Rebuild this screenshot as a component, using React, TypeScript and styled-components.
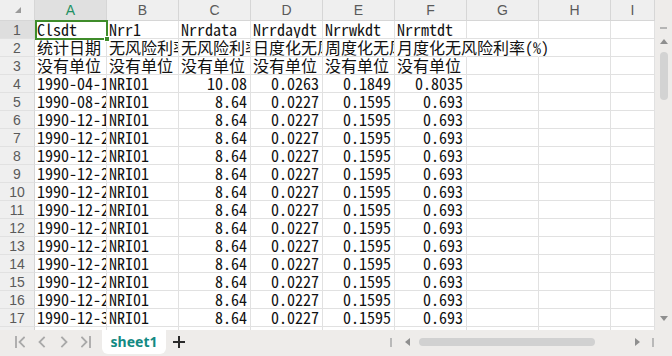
import React from 'react';
import styled, { createGlobalStyle } from 'styled-components';

const Global = createGlobalStyle`
  html, body { margin: 0; padding: 0; background: #fff; }
  body { width: 672px; height: 356px; overflow: hidden; }
`;

const CELL_FONT = '"Noto Sans Mono CJK SC", "Noto Sans CJK SC", "Liberation Mono", monospace';
const UI_FONT = '"Liberation Sans", "Noto Sans", Arial, sans-serif';
const GRID = '#e1e1e1';
const HEAD_LINE = '#d6d6d6';
const HEAD_BG = '#efefef';
const BAR_BG = '#eeecea';
const SEL = '#3f8c2a';

const Shell = styled.div`
  width: 672px;
  height: 356px;
  display: flex;
  flex-direction: column;
  overflow: hidden;
`;

const Main = styled.div`
  display: flex;
  height: 330px;
`;

const Sheet = styled.div`
  position: relative;
  flex: 1;
  overflow: hidden;
  display: grid;
  grid-template-columns: 35px repeat(8, 72px) 1fr;
  grid-template-rows: 21px repeat(18, 18px);
  background: #fff;
`;

const Corner = styled.div`
  background: ${HEAD_BG};
  border-right: 1px solid ${HEAD_LINE};
  border-bottom: 1px solid ${HEAD_LINE};
  display: flex;
  align-items: center;
  justify-content: center;
  padding-left: 2px;
`;

const ColHead = styled.div<{ $active?: boolean }>`
  background: ${(p) => (p.$active ? '#e0e0e0' : HEAD_BG)};
  color: ${(p) => (p.$active ? '#1f9063' : '#5a5a5a')};
  border-right: 1px solid ${HEAD_LINE};
  border-bottom: 1px solid ${HEAD_LINE};
  font-family: ${UI_FONT};
  font-size: 14px;
  display: flex;
  align-items: center;
  justify-content: center;
  overflow: hidden;
`;

const RowHead = styled.div<{ $active?: boolean }>`
  background: ${(p) => (p.$active ? '#dedede' : HEAD_BG)};
  color: #5a5a5a;
  border-right: 1px solid ${HEAD_LINE};
  border-bottom: 1px solid ${GRID};
  font-family: ${UI_FONT};
  font-size: 14px;
  display: flex;
  align-items: center;
  justify-content: center;
`;

const Cell = styled.div<{ $right?: boolean; $spill?: boolean }>`
  border-right: ${(p) => (p.$spill ? '1px solid transparent' : `1px solid ${GRID}`)};
  border-bottom: 1px solid ${GRID};
  font-family: ${CELL_FONT};
  font-size: 16px;
  line-height: 17px;
  color: #111;
  white-space: nowrap;
  overflow: ${(p) => (p.$spill ? 'visible' : 'hidden')};
  text-align: ${(p) => (p.$right ? 'right' : 'left')};
  padding: 0 3px 0 2px;
`;

/* selection frame drawn over cell A1 */
const Selection = styled.div`
  position: absolute;
  left: 35px;
  top: 20px;
  width: 73px;
  height: 20px;
  box-sizing: border-box;
  border: 2px solid ${SEL};
  pointer-events: none;
  z-index: 3;
`;

const FillHandle = styled.div`
  position: absolute;
  right: -4px;
  bottom: -4px;
  width: 6px;
  height: 6px;
  box-sizing: border-box;
  background: ${SEL};
  border: 1px solid #fff;
`;

const VScroll = styled.div`
  width: 17px;
  background: ${BAR_BG};
  display: flex;
  flex-direction: column;
  align-items: center;
  padding-top: 27px;
  box-sizing: border-box;
`;

const Dash = styled.div`
  width: 7px;
  height: 2px;
  background: #b5b5b5;
  margin-bottom: 9px;
`;

const VThumb = styled.div`
  width: 8px;
  height: 48px;
  border-radius: 4px;
  background: #d3d3d3;
  margin-top: 6px;
`;

const Spacer = styled.div`
  flex: 1;
`;

const Bottom = styled.div`
  height: 26px;
  background: ${BAR_BG};
  display: flex;
  align-items: flex-start;
`;

const Nav = styled.div`
  display: flex;
  align-items: center;
  height: 24px;
  padding-left: 15px;
  gap: 12px;
  width: 102px;
  box-sizing: border-box;
`;

const Tab = styled.div`
  width: 64px;
  height: 24px;
  background: #fff;
  border-radius: 0 0 6px 6px;
  display: flex;
  align-items: center;
  justify-content: center;
  font-family: "Noto Sans", ${UI_FONT};
  font-weight: 700;
  font-size: 14px;
  color: #138a83;
  padding-bottom: 1px;
  box-sizing: border-box;
`;

const Plus = styled.div`
  height: 24px;
  width: 22px;
  margin-left: 2px;
  display: flex;
  align-items: center;
  justify-content: center;
`;

const HScroll = styled.div`
  margin-left: auto;
  height: 24px;
  display: flex;
  align-items: center;
  padding-right: 18px;
`;

const Bar = styled.div<{ $ml?: number }>`
  width: 2px;
  height: 9px;
  background: #b9b9b9;
  margin-left: ${(p) => p.$ml ?? 0}px;
`;

const HTrack = styled.div`
  width: 211px;
  display: flex;
  margin-left: 7px;
`;

const HThumb = styled.div`
  width: 176px;
  height: 8px;
  border-radius: 4px;
  background: #d1d1d1;
`;

const Tri: React.FC<{ dir: 'up' | 'down' | 'left' | 'right'; ml?: number }> = ({ dir, ml = 0 }) => {
  const pts = {
    up: '0,6 4,1 8,6',
    down: '0,1 8,1 4,6',
    left: '6,0 6,8 1,4',
    right: '1,0 1,8 6,4',
  }[dir];
  return (
    <svg width="8" height="8" viewBox="0 0 8 8" style={{ marginLeft: ml, display: 'block' }}>
      <polygon points={pts} fill="#8f8f8f" />
    </svg>
  );
};

const NavIcon: React.FC<{ kind: 'first' | 'prev' | 'next' | 'last' }> = ({ kind }) => (
  <svg width="10" height="12" viewBox="0 0 10 12" style={{ display: 'block' }}>
    <g stroke="#a9a9a9" strokeWidth="1.8" fill="none" strokeLinecap="square">
      {kind === 'first' && (
        <>
          <line x1="1" y1="1" x2="1" y2="11" />
          <polyline points="9,1.5 4.5,6 9,10.5" />
        </>
      )}
      {kind === 'prev' && <polyline points="7,1.5 2.5,6 7,10.5" />}
      {kind === 'next' && <polyline points="3,1.5 7.5,6 3,10.5" />}
      {kind === 'last' && (
        <>
          <polyline points="1,1.5 5.5,6 1,10.5" />
          <line x1="9" y1="1" x2="9" y2="11" />
        </>
      )}
    </g>
  </svg>
);

const cols = ['A', 'B', 'C', 'D', 'E', 'F', 'G', 'H', 'I'];

type Row = { cells: string[]; right?: boolean[]; spill?: boolean[] };

const dates = [
  '1990-04-16', '1990-08-22', '1990-12-19', '1990-12-20', '1990-12-21', '1990-12-24',
  '1990-12-25', '1990-12-26', '1990-12-27', '1990-12-28', '1990-12-29', '1990-12-20',
  '1990-12-21', '1990-12-31',
];

const numRight = [false, false, true, true, true, true, false, false, false];

const rows: Row[] = [
  { cells: ['Clsdt', 'Nrr1', 'Nrrdata', 'Nrrdaydt', 'Nrrwkdt', 'Nrrmtdt', '', '', ''] },
  {
    cells: ['统计日期', '无风险利率(%)', '无风险利率(%)', '日度化无风险利率(%)', '周度化无风险利率(%)', '月度化无风险利率(%)', '', '', ''],
    spill: [false, false, false, false, false, true, true, false, false],
  },
  { cells: ['没有单位', '没有单位', '没有单位', '没有单位', '没有单位', '没有单位', '', '', ''] },
  ...dates.map((d, i) => ({
    cells: [d, 'NRI01', i === 0 ? '10.08' : '8.64', i === 0 ? '0.0263' : '0.0227', i === 0 ? '0.1849' : '0.1595', i === 0 ? '0.8035' : '0.693', '', '', ''],
    right: numRight,
  })),
  { cells: ['', '', '', '', '', '', '', '', ''] },
];

export default function App() {
  return (
    <>
      <Global />
      <Shell>
        <Main>
          <Sheet>
            <Corner>
              <svg width="6" height="6" viewBox="0 0 6 6">
                <polygon points="6,0 6,6 0,6" fill="#9a9a9a" />
              </svg>
            </Corner>
            {cols.map((c) => (
              <ColHead key={c} $active={c === 'A'}>
                {c}
              </ColHead>
            ))}
            {rows.map((r, ri) => (
              <React.Fragment key={ri}>
                <RowHead $active={ri === 0}>{ri < 17 ? ri + 1 : ''}</RowHead>
                {r.cells.map((v, ci) => (
                  <Cell key={ci} $right={r.right?.[ci]} $spill={r.spill?.[ci]}>
                    {v}
                  </Cell>
                ))}
              </React.Fragment>
            ))}
            <Selection>
              <FillHandle />
            </Selection>
          </Sheet>
          <VScroll>
            <Dash />
            <Tri dir="up" />
            <VThumb />
            <Spacer />
            <Tri dir="down" />
            <div style={{ height: 7 }} />
          </VScroll>
        </Main>
        <Bottom>
          <Nav>
            <NavIcon kind="first" />
            <NavIcon kind="prev" />
            <NavIcon kind="next" />
            <NavIcon kind="last" />
          </Nav>
          <Tab>sheet1</Tab>
          <Plus>
            <svg width="12" height="12" viewBox="0 0 12 12">
              <g stroke="#2a2a2a" strokeWidth="2">
                <line x1="6" y1="0" x2="6" y2="12" />
                <line x1="0" y1="6" x2="12" y2="6" />
              </g>
            </svg>
          </Plus>
          <HScroll>
            <Bar />
            <Tri dir="left" ml={12} />
            <HTrack>
              <HThumb />
            </HTrack>
            <Tri dir="right" ml={4} />
            <Bar $ml={10} />
          </HScroll>
        </Bottom>
      </Shell>
    </>
  );
}
